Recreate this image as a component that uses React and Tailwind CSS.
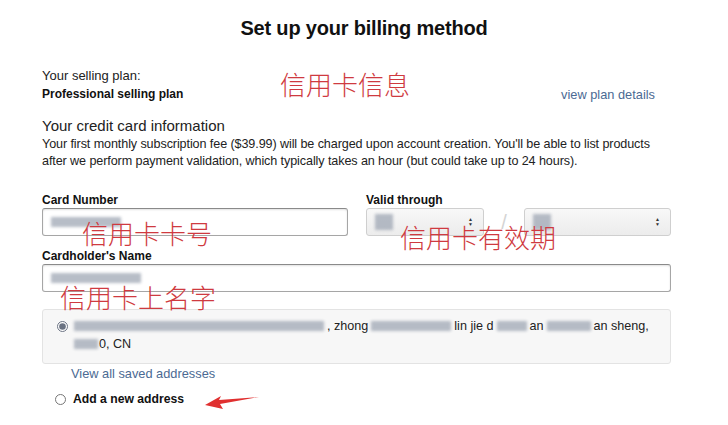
import { useState } from 'react';

const font = { fontFamily: '"Liberation Sans", Arial, sans-serif' };
const cjk = { fontFamily: '"Noto Sans CJK SC", sans-serif', fontWeight: 300 };

function Blur({ w, className = '' }) {
  return <span className={`inline-block h-[10px] bg-gray-400/70 blur-[1.5px] align-middle shrink-0 ${className}`} style={{ width: w }} />;
}

function Select() {
  return (
    <div className="h-[28px] rounded-[3px] border border-[#cfcfcf] bg-gradient-to-b from-[#f8f8f8] to-[#ececec] flex items-center px-2">
      <Blur w={18} className="h-[16px] bg-gray-300" />
      <span className="ml-auto mr-[2px] flex flex-col items-center text-[#333] leading-[5px]">
        <span className="text-[5px]">▲</span>
        <span className="text-[5px]">▼</span>
      </span>
    </div>
  );
}

export default function App() {
  const [addr, setAddr] = useState('saved');

  return (
    <div className="w-[728px] h-[425px] bg-white relative overflow-hidden text-[#111]" style={font}>
      <h1 className="pt-[13px] text-center text-[20px] font-bold tracking-[-0.2px]">Set up your billing method</h1>

      <div className="ml-[42px] mt-[24px] w-[629px]">
        {/* Selling plan */}
        <div className="flex items-end justify-between">
          <div>
            <div className="text-[13px] leading-[18px] text-[#222]">Your selling plan:</div>
            <div className="mt-[2px] text-[12px] font-bold leading-[15px]">Professional selling plan</div>
          </div>
          <a className="text-[12.8px] text-[#4b6a93] mr-[16px] leading-[15px]">view plan details</a>
        </div>

        {/* Credit card info */}
        <div className="mt-[15px] text-[15px] leading-[18px] text-[#222]">Your credit card information</div>
        <p className="mt-[1px] text-[12.6px] leading-[17px] text-[#222] tracking-[-0.1px]">
          Your first monthly subscription fee ($39.99) will be charged upon account creation. You'll be able to list products after we perform payment validation, which typically takes an hour (but could take up to 24 hours).
        </p>

        <div className="mt-[23px] flex">
          <div className="w-[306px]">
            <label className="block text-[12px] font-bold leading-[14px]">Card Number</label>
            <div className="mt-[1px] h-[28px] border border-[#a6a6a6] border-t-[#8a8a8a] rounded-[3px] shadow-[inset_0_1px_2px_rgba(0,0,0,0.12)] flex items-center px-2">
              <Blur w={70} className="bg-gray-300" />
            </div>
          </div>
          <div className="ml-[18px] flex-1">
            <label className="block text-[12px] font-bold leading-[14px]">Valid through</label>
            <div className="mt-[1px] flex items-center">
              <div className="w-[118px]"><Select /></div>
              <span className="w-[40px] text-center text-[#d4d4d4] text-[20px] leading-none">/</span>
              <div className="flex-1"><Select /></div>
            </div>
          </div>
        </div>

        <label className="mt-[13px] block text-[12px] font-bold leading-[14px]">Cardholder's Name</label>
        <div className="mt-[1px] h-[28px] border border-[#a6a6a6] border-t-[#8a8a8a] rounded-[3px] shadow-[inset_0_1px_2px_rgba(0,0,0,0.12)] flex items-center px-2">
          <Blur w={90} className="bg-gray-300" />
        </div>

        {/* Address */}
        <div className="mt-[17px] rounded-[3px] border border-[#e3e3e3] bg-[#f7f7f7] pl-[14px] pr-[10px] pt-[7px] pb-[10px] flex">
          <input type="radio" name="addr" checked={addr === 'saved'} onChange={() => setAddr('saved')} className="mt-[4px] w-[11px] h-[11px] accent-gray-500" />
          <div className="ml-[6px] text-[12.6px] leading-[18px] text-[#222] whitespace-nowrap">
            <div className="flex items-center gap-[3px]">
              <Blur w={250} />
              <span>, zhong</span>
              <Blur w={80} />
              <span>lin jie d</span>
              <Blur w={30} />
              <span>an</span>
              <Blur w={44} />
              <span>an sheng,</span>
            </div>
            <div className="flex items-center gap-[1px]">
              <Blur w={24} />
              <span>0, CN</span>
            </div>
          </div>
        </div>
        <a className="block mt-[2px] ml-[29px] text-[12.8px] leading-[16px] text-[#4b6a93]">View all saved addresses</a>
        <label className="mt-[8px] flex items-center">
          <input type="radio" name="addr" checked={addr === 'new'} onChange={() => setAddr('new')} className="ml-[13px] w-[11px] h-[11px] accent-gray-500" />
          <span className="ml-[7px] text-[12.2px] font-bold">Add a new address</span>
        </label>
      </div>

      {/* Red annotations */}
      <div className="absolute left-[280px] top-[64px] text-[26px] text-[#cf3a40]" style={cjk}>信用卡信息</div>
      <div className="absolute left-[82px] top-[213px] text-[26px] text-[#cf3a40]" style={cjk}>信用卡卡号</div>
      <div className="absolute left-[400px] top-[217px] text-[26px] text-[#cf3a40]" style={cjk}>信用卡有效期</div>
      <div className="absolute left-[60px] top-[277px] text-[26px] text-[#cf3a40]" style={cjk}>信用卡上名字</div>
      <svg className="absolute left-[203px] top-[394px]" width="58" height="16" viewBox="0 0 58 16">
        <path d="M56 3 L16 6 L18 2 L2 11 L20 15 L17 10 Z" fill="#e03030" />
      </svg>
    </div>
  );
}
